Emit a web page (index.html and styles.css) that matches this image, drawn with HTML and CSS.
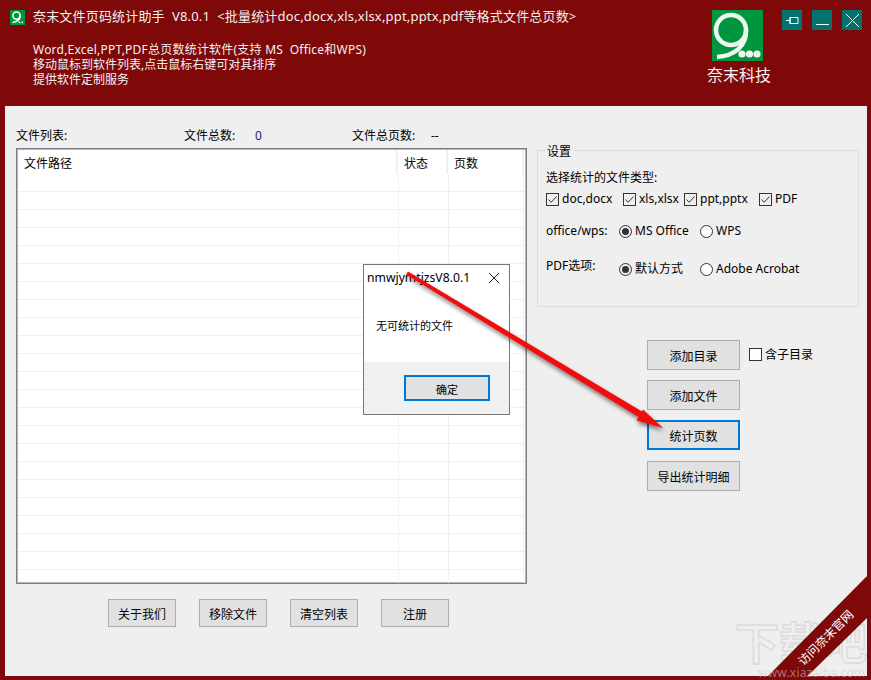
FILE: index.html
```html
<!DOCTYPE html>
<html lang="zh">
<head>
<meta charset="utf-8">
<title>奈末文件页码统计助手</title>
<link rel="stylesheet" href="styles.css">
</head>
<body>
<div class="app">
  <header class="top">
    <svg class="appicon" viewBox="0 0 15 15"><rect width="15" height="15" fill="#00963f"/><circle cx="6.500" cy="5.600" r="3.600" fill="none" stroke="#fff" stroke-width="1.500"/><path d="M10.100 5.600C10.100 9.500 7 12 2.500 12.500" fill="none" stroke="#fff" stroke-width="1.500"/><circle cx="9.500" cy="12.300" r=".9" fill="#fff"/><circle cx="12.300" cy="12.300" r=".9" fill="#fff"/></svg>
    <div class="intro">
      <div class="title">奈末文件页码统计助手&nbsp; V8.0.1 &nbsp;&lt;批量统计doc,docx,xls,xlsx,ppt,pptx,pdf等格式文件总页数&gt;</div>
      <div class="desc">
        <div class="descfirst">Word,Excel,PPT,PDF总页数统计软件(支持 MS&nbsp; Office和WPS)</div>
        <div>移动鼠标到软件列表,点击鼠标右键可对其排序</div>
        <div>提供软件定制服务</div>
      </div>
    </div>
    <div class="brand">
      <svg class="logo" viewBox="0 0 51 51"><rect width="51" height="51" fill="#00963f"/><circle cx="19" cy="20" r="15" fill="none" stroke="#eef7ee" stroke-width="4.500"/><path d="M34 20C35 36 22 46 5 47" fill="none" stroke="#eef7ee" stroke-width="4.500"/><circle cx="30" cy="44" r="3.600" fill="#eef7ee"/><circle cx="37.500" cy="44" r="3.600" fill="#eef7ee"/><circle cx="45" cy="44" r="3.600" fill="#eef7ee"/></svg>
      <div class="brandname">奈末科技</div>
    </div>
    <div class="winbtns">
      <div class="winbtn"><svg viewBox="0 0 20 20"><path d="M4 10.500H8M8 7.500H16V13.500H8ZM8 7V14" fill="none" stroke="#fff"/></svg></div>
      <div class="winbtn"><svg viewBox="0 0 20 20"><path d="M4 14.500H17" fill="none" stroke="#fff"/></svg></div>
      <div class="winbtn"><svg viewBox="0 0 20 20"><path d="M4 4L17 17M17 4L4 17" fill="none" stroke="#fff"/></svg></div>
    </div>
  </header>

  <main class="panel">
    <section class="left">
      <div class="stats">
        <span class="st1">文件列表:</span>
        <span class="st2">文件总数:</span>
        <span class="st3">0</span>
        <span class="st4">文件总页数:</span>
        <span class="st5">--</span>
      </div>
      <div class="table">
        <div class="thead"><div class="c1">文件路径</div><div class="c2">状态</div><div class="c3">页数</div></div>
        <div class="row"><i></i><i></i><i></i></div><div class="row"><i></i><i></i><i></i></div><div class="row"><i></i><i></i><i></i></div>
        <div class="row"><i></i><i></i><i></i></div><div class="row"><i></i><i></i><i></i></div><div class="row"><i></i><i></i><i></i></div>
        <div class="row"><i></i><i></i><i></i></div><div class="row"><i></i><i></i><i></i></div><div class="row"><i></i><i></i><i></i></div>
        <div class="row"><i></i><i></i><i></i></div><div class="row"><i></i><i></i><i></i></div><div class="row"><i></i><i></i><i></i></div>
        <div class="row"><i></i><i></i><i></i></div><div class="row"><i></i><i></i><i></i></div><div class="row"><i></i><i></i><i></i></div>
        <div class="row"><i></i><i></i><i></i></div><div class="row"><i></i><i></i><i></i></div><div class="row"><i></i><i></i><i></i></div>
        <div class="row"><i></i><i></i><i></i></div><div class="row"><i></i><i></i><i></i></div><div class="row"><i></i><i></i><i></i></div>
        <div class="row"><i></i><i></i><i></i></div>
        <div class="row last"><i></i><i></i><i></i></div>
      </div>
      <div class="bottombtns">
        <div class="btn small">关于我们</div>
        <div class="btn small">移除文件</div>
        <div class="btn small">清空列表</div>
        <div class="btn small">注册</div>
      </div>
    </section>

    <section class="right">
      <div class="group">
        <div class="legend">设置</div>
        <div class="typelabel">选择统计的文件类型:</div>
        <div class="checks">
          <span class="opt o1"><svg class="cb" viewBox="0 0 13 13"><rect x=".5" y=".5" width="12" height="12" fill="none" stroke="#333"/><path d="M2.500 6.500L5.200 9.300L10.500 3.500" fill="none" stroke="#333"/></svg>doc,docx</span>
          <span class="opt o2"><svg class="cb" viewBox="0 0 13 13"><rect x=".5" y=".5" width="12" height="12" fill="none" stroke="#333"/><path d="M2.500 6.500L5.200 9.300L10.500 3.500" fill="none" stroke="#333"/></svg>xls,xlsx</span>
          <span class="opt o3"><svg class="cb" viewBox="0 0 13 13"><rect x=".5" y=".5" width="12" height="12" fill="none" stroke="#333"/><path d="M2.500 6.500L5.200 9.300L10.500 3.500" fill="none" stroke="#333"/></svg>ppt,pptx</span>
          <span class="opt"><svg class="cb" viewBox="0 0 13 13"><rect x=".5" y=".5" width="12" height="12" fill="none" stroke="#333"/><path d="M2.500 6.500L5.200 9.300L10.500 3.500" fill="none" stroke="#333"/></svg>PDF</span>
        </div>
        <div class="radios r1">
          <span class="rlabel">office/wps:</span>
          <span class="opt o4"><svg class="rb" viewBox="0 0 13 13"><circle cx="6.500" cy="6.500" r="6" fill="none" stroke="#333"/><circle cx="6.500" cy="6.500" r="3.500" fill="#333"/></svg>MS Office</span>
          <span class="opt"><svg class="rb" viewBox="0 0 13 13"><circle cx="6.500" cy="6.500" r="6" fill="#fff" stroke="#333"/></svg>WPS</span>
        </div>
        <div class="radios r2">
          <span class="rlabel">PDF选项:</span>
          <span class="opt o4"><svg class="rb" viewBox="0 0 13 13"><circle cx="6.500" cy="6.500" r="6" fill="none" stroke="#333"/><circle cx="6.500" cy="6.500" r="3.500" fill="#333"/></svg>默认方式</span>
          <span class="opt"><svg class="rb" viewBox="0 0 13 13"><circle cx="6.500" cy="6.500" r="6" fill="#fff" stroke="#333"/></svg>Adobe Acrobat</span>
        </div>
      </div>
      <div class="actions">
        <div class="actionrow"><div class="btn big">添加目录</div><span class="opt sub"><svg class="cb" viewBox="0 0 13 13"><rect x=".5" y=".5" width="12" height="12" fill="#fff" stroke="#333"/></svg>含子目录</span></div>
        <div class="btn big">添加文件</div>
        <div class="btn big focus">统计页数</div>
        <div class="btn big export">导出统计明细</div>
      </div>
    </section>
  </main>

  <div class="watermark"><span class="wmbig">下载吧</span></div>
  <div class="ribbon"></div>
  <div class="ribbontext">访问奈末官网</div>
  <div class="wmurl">www.xiazaiba.com</div>

  <div class="dialog">
    <div class="dlghead"><span>nmwjymtjzsV8.0.1</span><svg class="dlgx" viewBox="0 0 12 12"><path d="M1 1L11 11M11 1L1 11" fill="none" stroke="#222"/></svg></div>
    <div class="dlgbody">无可统计的文件</div>
    <div class="dlgfoot"><div class="btn dlgbtn">确定</div></div>
  </div>

  <svg class="arrow" viewBox="0 0 871 680">
    <defs><filter id="sh" x="-10%" y="-10%" width="120%" height="130%"><feDropShadow dx="1" dy="3" stdDeviation="2" flood-color="#000" flood-opacity=".5"/></filter></defs>
    <path filter="url(#sh)" fill="#f00a0a" d="M408 271.500L642 411.500L643 409.500L663 428L636.500 420.500L638.500 417L406 274.500Z"/>
  </svg>
</div>
</body>
</html>
```
FILE: styles.css
```css
* { box-sizing: border-box; }
html, body { margin: 0; padding: 0; }
body { width: 871px; height: 680px; overflow: hidden; font-family: "Noto Sans", "Noto Sans CJK SC", sans-serif; font-size: 12px; color: #000; }
.app { position: relative; width: 871px; height: 680px; background: #7f0808; display: flex; flex-direction: column; overflow: hidden; }

.top { height: 106px; display: flex; color: #f4f0f0; flex: none; }
.appicon { width: 15px; height: 15px; margin: 10px 0 0 10px; flex: none; }
.intro { margin: 8px 0 0 8px; width: 679px; flex: none; }
.title { font-size: 13px; line-height: 17px; letter-spacing: .18px; white-space: nowrap; }
.desc { margin-top: 17px; font-size: 12px; line-height: 15px; white-space: nowrap; }
.descfirst { letter-spacing: .22px; }
.brand { display: flex; flex-direction: column; align-items: center; width: 72px; margin: 10px 0 0 -11px; flex: none; }
.logo { width: 51px; height: 51px; display: block; }
.brandname { font-size: 16px; line-height: 22px; margin: 3px 0 0 4px; white-space: nowrap; }
.winbtns { display: flex; gap: 10px; margin: 10px 0 0 9px; }
.winbtn { width: 20px; height: 20px; background: #00736f; }
.winbtn svg { display: block; width: 20px; height: 20px; }

.panel { margin: 0 4px 4px 5px; flex: 1; background: #efefef; display: flex; padding: 0 8px 0 11px; }
.left { width: 511px; flex: none; }
.stats { height: 42px; padding-top: 22px; display: flex; line-height: 16px; white-space: nowrap; }
.st1 { width: 168px; }
.st2 { width: 71px; }
.st3 { width: 97px; color: #1a2a66; }
.st4 { width: 79px; }

.table { height: 436px; width: 511px; border: 1px solid #7d7d88; box-shadow: inset 0 0 0 1px #b4b4bc; padding: 1px; background: #fff; overflow: hidden; }
.thead { display: flex; height: 24px; line-height: 24px; }
.thead div { border-right: 2px solid #f0f0f0; height: 24px; padding: 2px 0 0 6px; }
.c1 { width: 380px; }
.c2 { width: 50px; }
.c3 { width: 76px; }
.row { display: flex; height: 18px; border-bottom: 1px solid #efefef; }
.row.last { border-bottom: 0; }
.row i { display: block; border-right: 1px solid #f0f0f0; height: 100%; }
.row i:nth-child(1) { width: 381px; }
.row i:nth-child(2) { width: 50px; }
.row i:nth-child(3) { width: 75px; }

.bottombtns { display: flex; gap: 23px; margin: 15px 0 0 92px; }
.btn { display: flex; align-items: center; justify-content: center; background: #e1e1e1; border: 1px solid #adadad; padding-top: 2px; white-space: nowrap; }
.btn.small { width: 68px; height: 28px; }

.right { width: 322px; margin-left: 10px; flex: none; }
.group { position: relative; margin-top: 44px; height: 157px; border: 1px solid #dcdcdc; padding: 0 8px; }
.legend { position: absolute; left: 7px; top: -7px; padding: 0 2px; background: #efefef; line-height: 15px; }
.typelabel { margin-top: 19px; line-height: 16px; }
.checks { display: flex; margin-top: 5px; line-height: 16px; white-space: nowrap; }
.opt { display: inline-flex; align-items: center; white-space: nowrap; }
.cb { width: 13px; height: 13px; margin-right: 3px; flex: none; }
.rb { width: 13px; height: 13px; margin-right: 3px; flex: none; }
.o1 { width: 77px; }
.o2 { width: 61px; }
.o3 { width: 75px; }
.radios { display: flex; align-items: flex-start; white-space: nowrap; line-height: 16px; }
.r1 { margin-top: 16px; }
.r2 { margin-top: 22px; }
.r2 .rlabel { margin-top: -3px; }
.rlabel { width: 73px; }
.o4 { width: 81px; }

.actions { margin: 33px 0 0 110px; display: flex; flex-direction: column; gap: 10px; }
.actionrow { display: flex; align-items: flex-start; }
.btn.big { width: 93px; height: 30px; }
.btn.focus { border: 2px solid #0078d7; }
.btn.export { margin-top: 1px; }
.sub { margin: 5px 0 0 9px; }

.watermark { position: absolute; left: 735px; top: 618px; width: 132px; height: 58px; overflow: hidden; }
.wmbig { display: block; font-size: 44px; line-height: 50px; font-weight: 700; white-space: nowrap; color: transparent; -webkit-text-stroke: 1.500px #dcdcdc; }
.wmurl { position: absolute; left: 758px; top: 667px; font-size: 12px; line-height: 12px; letter-spacing: .2px; color: rgba(205, 205, 205, .55); white-space: nowrap; }

.ribbon { position: absolute; left: 768px; top: 576px; width: 99px; height: 100px; background: #7f0808; clip-path: polygon(100% 0, 100% 42%, 40% 100%, 0 100%); }
.ribbontext { position: absolute; left: 786px; top: 630px; width: 80px; text-align: center; color: #fff; font-size: 12px; line-height: 16px; transform: rotate(-45deg); white-space: nowrap; }

.dialog { position: absolute; left: 363px; top: 264px; width: 147px; height: 151px; border: 1px solid #777; background: #fff; display: flex; flex-direction: column; }
.dlghead { height: 24px; padding: 4px 0 0 3px; line-height: 17px; position: relative; font-size: 12.200px; }
.dlgx { position: absolute; right: 9px; top: 7px; width: 12px; height: 12px; }
.dlgbody { height: 73px; padding: 29px 0 0 12px; font-size: 11px; line-height: 16px; }
.dlgfoot { flex: 1; background: #f0f0f0; padding: 13px 0 0 40px; }
.btn.dlgbtn { width: 86px; height: 26px; border: 2px solid #0078d7; font-size: 11px; }

.arrow { position: absolute; left: 0; top: 0; width: 871px; height: 680px; pointer-events: none; }
```
